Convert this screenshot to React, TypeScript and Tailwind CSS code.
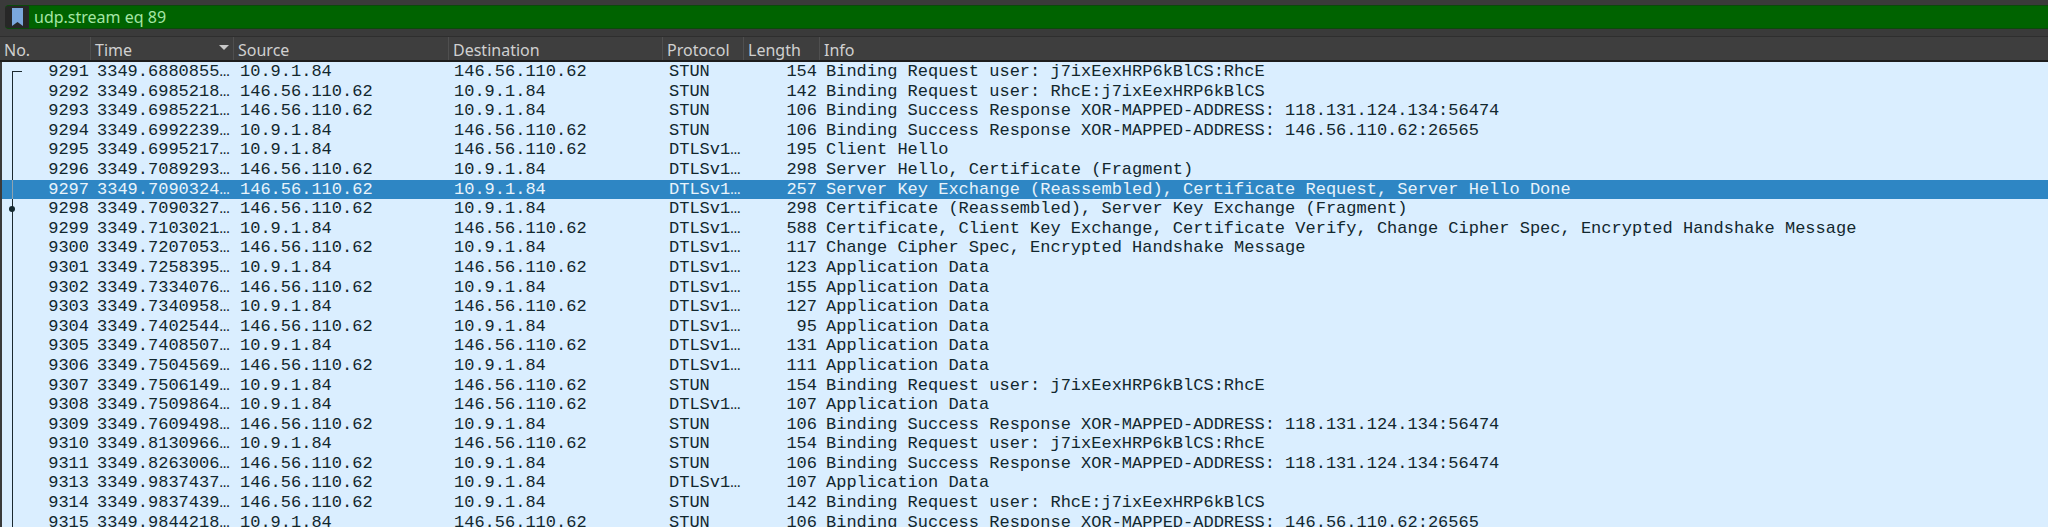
const headCols = "grid grid-cols-[91px_143px_215px_214px_81px_76px_1fr]";
const rowCols = "grid grid-cols-[89px_143px_215px_214px_81px_76px_1fr]";

type Packet = [string, string, string, string, string, string, string];

const a = "10.9.1.84";
const b = "146.56.110.62";

const packets: Packet[] = [
  ["9291", "3349.6880855…", a, b, "STUN", "154", "Binding Request user: j7ixEexHRP6kBlCS:RhcE"],
  ["9292", "3349.6985218…", b, a, "STUN", "142", "Binding Request user: RhcE:j7ixEexHRP6kBlCS"],
  ["9293", "3349.6985221…", b, a, "STUN", "106", "Binding Success Response XOR-MAPPED-ADDRESS: 118.131.124.134:56474"],
  ["9294", "3349.6992239…", a, b, "STUN", "106", "Binding Success Response XOR-MAPPED-ADDRESS: 146.56.110.62:26565"],
  ["9295", "3349.6995217…", a, b, "DTLSv1…", "195", "Client Hello"],
  ["9296", "3349.7089293…", b, a, "DTLSv1…", "298", "Server Hello, Certificate (Fragment)"],
  ["9297", "3349.7090324…", b, a, "DTLSv1…", "257", "Server Key Exchange (Reassembled), Certificate Request, Server Hello Done"],
  ["9298", "3349.7090327…", b, a, "DTLSv1…", "298", "Certificate (Reassembled), Server Key Exchange (Fragment)"],
  ["9299", "3349.7103021…", a, b, "DTLSv1…", "588", "Certificate, Client Key Exchange, Certificate Verify, Change Cipher Spec, Encrypted Handshake Message"],
  ["9300", "3349.7207053…", b, a, "DTLSv1…", "117", "Change Cipher Spec, Encrypted Handshake Message"],
  ["9301", "3349.7258395…", a, b, "DTLSv1…", "123", "Application Data"],
  ["9302", "3349.7334076…", b, a, "DTLSv1…", "155", "Application Data"],
  ["9303", "3349.7340958…", a, b, "DTLSv1…", "127", "Application Data"],
  ["9304", "3349.7402544…", b, a, "DTLSv1…", "95", "Application Data"],
  ["9305", "3349.7408507…", a, b, "DTLSv1…", "131", "Application Data"],
  ["9306", "3349.7504569…", b, a, "DTLSv1…", "111", "Application Data"],
  ["9307", "3349.7506149…", a, b, "STUN", "154", "Binding Request user: j7ixEexHRP6kBlCS:RhcE"],
  ["9308", "3349.7509864…", a, b, "DTLSv1…", "107", "Application Data"],
  ["9309", "3349.7609498…", b, a, "STUN", "106", "Binding Success Response XOR-MAPPED-ADDRESS: 118.131.124.134:56474"],
  ["9310", "3349.8130966…", a, b, "STUN", "154", "Binding Request user: j7ixEexHRP6kBlCS:RhcE"],
  ["9311", "3349.8263006…", b, a, "STUN", "106", "Binding Success Response XOR-MAPPED-ADDRESS: 118.131.124.134:56474"],
  ["9313", "3349.9837437…", b, a, "DTLSv1…", "107", "Application Data"],
  ["9314", "3349.9837439…", b, a, "STUN", "142", "Binding Request user: RhcE:j7ixEexHRP6kBlCS"],
  ["9315", "3349.9844218…", a, b, "STUN", "106", "Binding Success Response XOR-MAPPED-ADDRESS: 146.56.110.62:26565"],
];

const headers = ["No.", "Time", "Source", "Destination", "Protocol", "Length", "Info"];

const FilterBar = () => (
  <div className="h-[37px] bg-[#3a3a3a] pt-[5px] pl-[5px] border-b border-[#2e2e2e]">
    <div className="h-[24px] flex items-stretch bg-[#272727] rounded-l-[4px] border-y border-[#0b4a0b]">
      <div className="w-[24px] flex justify-center items-center shrink-0">
        <svg width="11" height="18" viewBox="0 0 11 18">
          <path d="M0 0h11v18l-5.5-4-5.5 4z" fill="#7aa7dc" />
        </svg>
      </div>
      <div className="flex-1 bg-[#006300] text-[#a5e6a5] text-[16px] leading-[22px] pl-[5px] font-['Noto_Sans',sans-serif]">
        udp.stream eq 89
      </div>
    </div>
  </div>
);

const HeaderRow = () => (
  <div className={`${headCols} h-[25px] bg-[#3e3e3e] border-b-2 border-[#1d1d1d] text-[#d0d0d0] text-[16px] leading-[26px] font-['Noto_Sans',sans-serif]`}>
    {headers.map((h) => (
      <div key={h} className="relative pl-[4px] border-r border-[#4f4f4f] last:border-r-0 whitespace-nowrap overflow-hidden">
        {h}
        {h === "Time" && (
          <span className="absolute right-[4px] top-[8px] w-0 h-0 border-x-[5px] border-x-transparent border-t-[5px] border-t-[#c8c8c8]" />
        )}
      </div>
    ))}
  </div>
);

const PacketRow = ({ p, index }: { p: Packet; index: number }) => {
  const selected = p[0] === "9297";
  return (
    <div className={`${rowCols} h-[19.6px] leading-[19px] whitespace-pre ${selected ? "bg-[#2e86c4] text-[#e8f3fb]" : "text-[#12272e]"}`}>
      <div className="relative text-right pr-[2px]">
        {index === 0 && <span className="absolute left-[10px] top-[9px] w-[10px] h-px bg-[#1c2a30]" />}
        <span className={`absolute left-[10px] bottom-0 w-px ${index === 0 ? "top-[9px]" : "top-0"} ${selected ? "bg-[#8fa3b0]" : "bg-[#1c2a30]"}`} />
        {p[0] === "9298" && <span className="absolute left-[7px] top-[7px] w-[6px] h-[6px] rounded-full bg-[#12272e]" />}
        {p[0]}
      </div>
      <div className="pl-[6px]">{p[1]}</div>
      <div className="pl-[6px]">{p[2]}</div>
      <div className="pl-[5px]">{p[3]}</div>
      <div className="pl-[6px]">{p[4]}</div>
      <div className="text-right pr-[3px]">{p[5]}</div>
      <div className="pl-[6px]">{p[6]}</div>
    </div>
  );
};

export default function App() {
  return (
    <div className="w-[2048px] h-[527px] overflow-hidden bg-[#daeeff]">
      <FilterBar />
      <HeaderRow />
      <div className="border-l-2 border-[#3a3a3a] text-[17px] font-['Liberation_Mono',monospace]">
        {packets.map((p, i) => (
          <PacketRow key={p[0]} p={p} index={i} />
        ))}
      </div>
    </div>
  );
}
